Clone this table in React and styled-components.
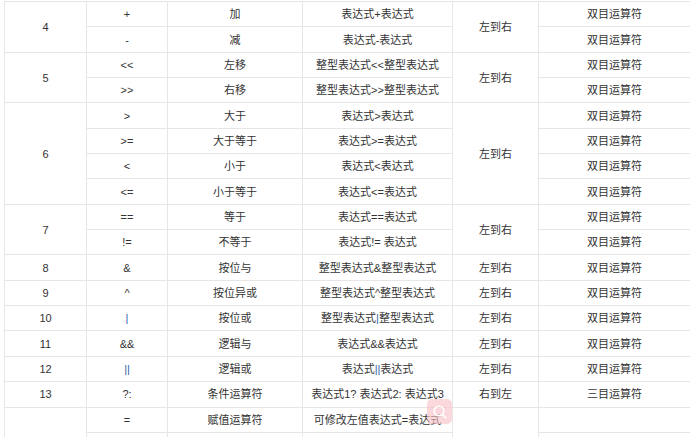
import styled, { createGlobalStyle } from 'styled-components'

const GlobalStyle = createGlobalStyle`
  html, body {
    margin: 0;
    padding: 0;
    background: #fff;
  }
  body {
    font-family: "Liberation Sans", "Noto Sans CJK SC", sans-serif;
    overflow: hidden;
  }
`

// widths of the six columns, left to right
const columns = [82, 81, 135, 150, 86, 152]

const Pipe = ({ children }) => <Blue>{children}</Blue>

const groups = [
  {
    level: '4',
    dir: '左到右',
    rows: [
      ['+', '加', '表达式+表达式', '双目运算符'],
      ['-', '减', '表达式-表达式', '双目运算符'],
    ],
  },
  {
    level: '5',
    dir: '左到右',
    rows: [
      ['<<', '左移', '整型表达式<<整型表达式', '双目运算符'],
      ['>>', '右移', '整型表达式>>整型表达式', '双目运算符'],
    ],
  },
  {
    level: '6',
    dir: '左到右',
    rows: [
      ['>', '大于', '表达式>表达式', '双目运算符'],
      ['>=', '大于等于', '表达式>=表达式', '双目运算符'],
      ['<', '小于', '表达式<表达式', '双目运算符'],
      ['<=', '小于等于', '表达式<=表达式', '双目运算符'],
    ],
  },
  {
    level: '7',
    dir: '左到右',
    rows: [
      ['==', '等于', '表达式==表达式', '双目运算符'],
      ['!=', '不等于', '表达式!= 表达式', '双目运算符'],
    ],
  },
  { level: '8', dir: '左到右', rows: [['&', '按位与', '整型表达式&整型表达式', '双目运算符']] },
  { level: '9', dir: '左到右', rows: [['^', '按位异或', '整型表达式^整型表达式', '双目运算符']] },
  {
    level: '10',
    dir: '左到右',
    rows: [[<Pipe>|</Pipe>, '按位或', <>整型表达式<Pipe>|</Pipe>整型表达式</>, '双目运算符']],
  },
  { level: '11', dir: '左到右', rows: [['&&', '逻辑与', '表达式&&表达式', '双目运算符']] },
  {
    level: '12',
    dir: '左到右',
    rows: [[<Pipe>||</Pipe>, '逻辑或', <>表达式<Pipe>||</Pipe>表达式</>, '双目运算符']],
  },
  { level: '13', dir: '右到左', rows: [['?:', '条件运算符', '表达式1? 表达式2: 表达式3', '三目运算符']] },
  {
    level: '',
    dir: '',
    rows: [
      ['=', '赋值运算符', '可修改左值表达式=表达式', ''],
      ['', '', '', ''],
    ],
  },
]

export default function App() {
  return (
    <Page>
      <GlobalStyle />
      <Table>
        <colgroup>
          {columns.map((w, i) => (
            <Col key={i} $w={w} />
          ))}
        </colgroup>
        <tbody>
          {groups.map((g, gi) =>
            g.rows.map((r, ri) => (
              <Row key={`${gi}-${ri}`}>
                {ri === 0 && <Cell rowSpan={g.rows.length}>{g.level}</Cell>}
                <Cell>{r[0]}</Cell>
                <Cell>{r[1]}</Cell>
                <Cell>{r[2]}</Cell>
                {ri === 0 && <Cell rowSpan={g.rows.length}>{g.dir}</Cell>}
                <Cell>{r[3]}</Cell>
              </Row>
            ))
          )}
        </tbody>
      </Table>
      <SearchBadge>
        <svg width="16" height="16" viewBox="0 0 16 16" fill="none">
          <circle cx="7" cy="7" r="4.8" stroke="#fff" strokeWidth="1.6" />
          <path d="M10.5 10.5 L14 14" stroke="#fff" strokeWidth="1.6" strokeLinecap="round" />
        </svg>
      </SearchBadge>
    </Page>
  )
}

const Page = styled.div`
  position: relative;
  width: 690px;
  height: 437px;
  overflow: hidden;
  padding: 1px 0 0 4px;
  box-sizing: border-box;
`

const Table = styled.table`
  table-layout: fixed;
  width: 686px;
  border-collapse: collapse;
  font-size: 11px;
  color: #333;
`

const Col = styled.col`
  width: ${({ $w }) => $w}px;
`

const Row = styled.tr`
  height: 25.35px;
`

const Cell = styled.td`
  border: 1px solid #e6e6e6;
  text-align: center;
  vertical-align: middle;
  padding: 0 2px;
  white-space: nowrap;
  line-height: 14px;
`

const Blue = styled.span`
  color: #2f5fa8;
`

const SearchBadge = styled.div`
  position: absolute;
  left: 427px;
  top: 399px;
  width: 25px;
  height: 25px;
  border-radius: 5px;
  background: rgba(248, 190, 196, 0.6);
  display: flex;
  align-items: center;
  justify-content: center;
`
